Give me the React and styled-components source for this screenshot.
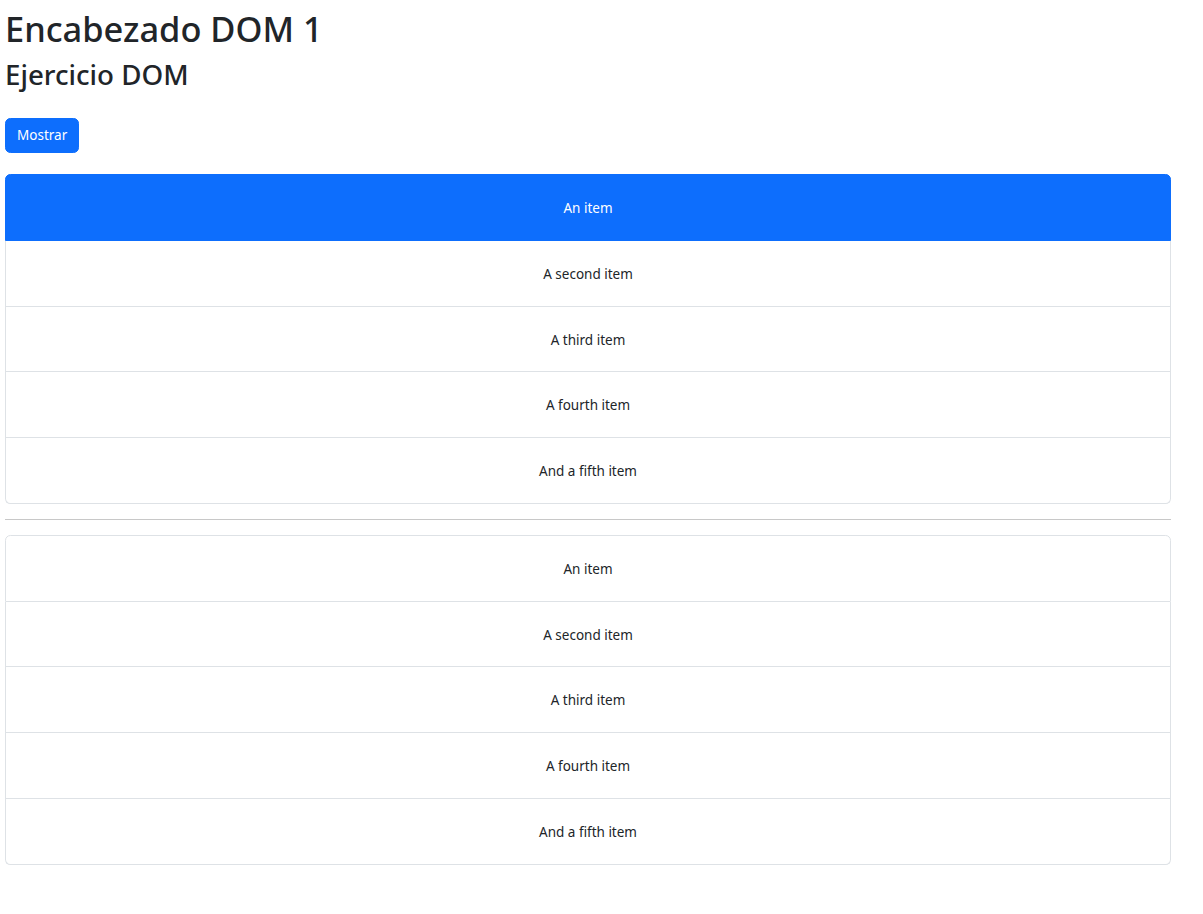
import React from 'react'
import styled, {createGlobalStyle} from 'styled-components'

const GlobalStyle = createGlobalStyle`
    body {
        margin: 0;
        font-family: "Segoe UI", "Noto Sans", "Liberation Sans", sans-serif;
        font-size: 13.5px;
        line-height: 21.6px;
        color: #212529;
        background-color: #fff;
    }
`

const Page = styled.div`
    padding: 7px 0 0 5px;
    width: 1166px;
`

const Title = styled.h1`
    margin: 0 0 7.2px;
    font-size: 34.4px;
    font-weight: 500;
    line-height: 43.2px;
`

const Subtitle = styled.h2`
    margin: 0 0 26px;
    font-size: 27.7px;
    font-weight: 500;
    line-height: 34.6px;
`

const Button = styled.button`
    display: block;
    height: 35px;
    padding: 0 11px;
    font-family: inherit;
    font-size: 13.5px;
    color: #fff;
    background-color: #0d6efd;
    border: 1px solid #0d6efd;
    border-radius: 5.4px;
    cursor: pointer;
    margin-bottom: 21px;
`

const List = styled.ul`
    list-style: none;
    margin: 0;
    padding: 0;
    border-radius: 5.4px;
`

const Item = styled.li`
    padding: 23px 14.4px 20.2px;
    text-align: center;
    border: 1px solid ${props => props.active ? '#0d6efd' : '#dee2e6'};
    background-color: ${props => props.active ? '#0d6efd' : '#fff'};
    color: ${props => props.active ? '#fff' : '#212529'};

    & + & {
        border-top-width: 0;
    }

    &:first-child {
        border-top-left-radius: inherit;
        border-top-right-radius: inherit;
    }

    &:last-child {
        border-bottom-left-radius: inherit;
        border-bottom-right-radius: inherit;
    }
`

const Divider = styled.hr`
    margin: 15px 0;
    border: 0;
    border-top: 1px solid #c8c8c8;
`

const items = ['An item', 'A second item', 'A third item', 'A fourth item', 'And a fifth item']

const App = () => {
    return (
        <Page>
            <GlobalStyle />
            <Title>Encabezado DOM 1</Title>
            <Subtitle>Ejercicio DOM</Subtitle>
            <Button>Mostrar</Button>
            <List>
                {items.map((item, index) => (
                    <Item key={index} active={index === 0}>{item}</Item>
                ))}
            </List>
            <Divider />
            <List>
                {items.map((item, index) => (
                    <Item key={index}>{item}</Item>
                ))}
            </List>
        </Page>
    )
}

export default App
